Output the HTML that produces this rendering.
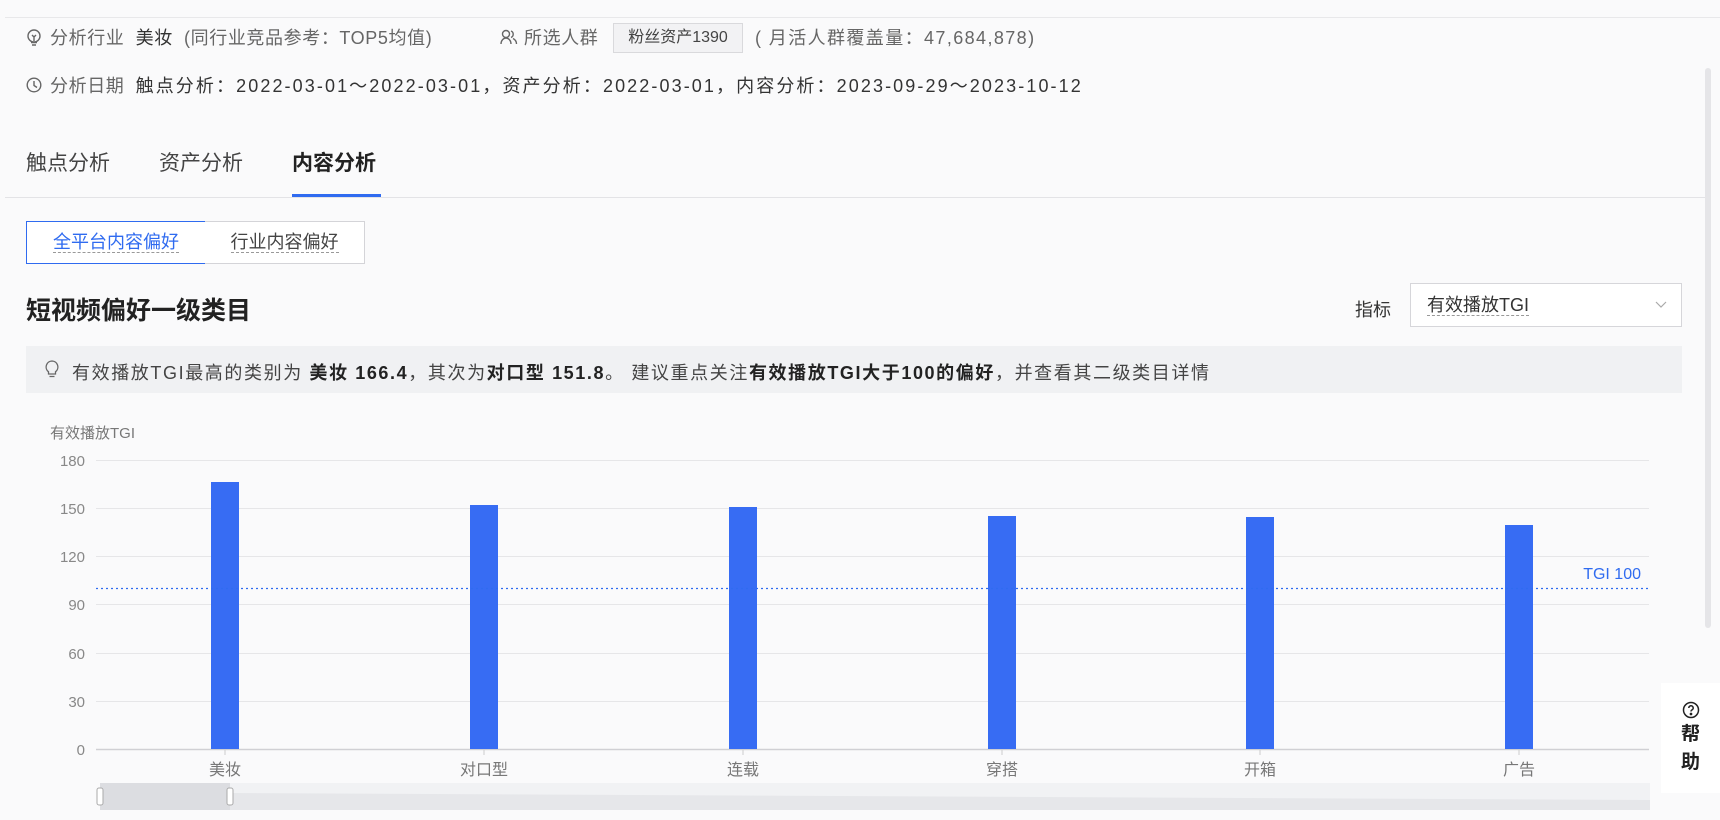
<!DOCTYPE html>
<html><head><meta charset="utf-8"><style>
*{margin:0;padding:0;box-sizing:border-box}
body{width:1720px;height:820px;overflow:hidden;background:#fafafb;font-family:"Liberation Sans","Noto Sans CJK SC",sans-serif;color:#333;position:relative}
.a{position:absolute;white-space:nowrap}
.lbl{color:#666}
.r{font-size:18px;line-height:20px}
</style></head><body>
<div class="a" style="left:5px;right:0;top:17px;height:1px;background:#e8e8ea"></div>

<svg class="a" style="left:26px;top:29px" width="16" height="17" viewBox="0 0 16 17" fill="none" stroke="#666" stroke-width="1.4"><circle cx="8" cy="7" r="6"/><path d="M5 13.5h6M6 16h4M6 6l2 2 2-2M8 8v4"/></svg>
<div class="a r" style="left:50px;top:28px;letter-spacing:0.6px"><span class="lbl">分析行业</span>&nbsp; 美妆 <span class="lbl">&nbsp;(同行业竞品参考：TOP5均值)</span></div>
<svg class="a" style="left:500px;top:29px" width="18" height="16" viewBox="0 0 18 16" fill="none" stroke="#666" stroke-width="1.4"><circle cx="6" cy="5" r="3.5"/><path d="M1 15c0-3.5 2.5-6 5-6s5 2.5 5 6M11 2a3.5 3.5 0 0 1 0 6.5M13 9.5c2 1 3.5 3 3.5 5.5"/></svg>
<div class="a r lbl" style="left:524px;top:28px;letter-spacing:0.6px">所选人群</div>
<div class="a" style="left:613px;top:23px;width:130px;height:30px;border:1px solid #d9d9dc;background:#f2f2f4;font-size:16px;line-height:28px;text-align:center;color:#444">粉丝资产1390</div>
<div class="a r lbl" style="left:755px;top:28px;letter-spacing:1.4px">( 月活人群覆盖量：47,684,878)</div>

<svg class="a" style="left:26px;top:77px" width="16" height="16" viewBox="0 0 16 16" fill="none" stroke="#666" stroke-width="1.4"><circle cx="8" cy="8" r="6.8"/><path d="M8 4v4.5l3 2"/></svg>
<div class="a r" style="left:50px;top:76px;letter-spacing:0.6px"><span class="lbl">分析日期</span>&nbsp; <span style="letter-spacing:2.1px">触点分析：2022-03-01～2022-03-01，资产分析：2022-03-01，内容分析：2023-09-29～2023-10-12</span></div>

<div class="a" style="left:26px;top:147px;font-size:21px;color:#444">触点分析</div>
<div class="a" style="left:159px;top:147px;font-size:21px;color:#444">资产分析</div>
<div class="a" style="left:292px;top:147px;font-size:21px;font-weight:bold;color:#222">内容分析</div>
<div class="a" style="left:5px;right:14px;top:197px;height:1px;background:#e3e3e6"></div>
<div class="a" style="left:292px;top:194px;width:89px;height:3px;background:#2f6bf0"></div>

<div class="a" style="left:26px;top:221px;width:180px;height:43px;border:1px solid #2f6bf0;background:#fff;font-size:18px;line-height:41px;text-align:center;color:#2f6bf0"><span style="border-bottom:1px dashed #999">全平台内容偏好</span></div>
<div class="a" style="left:205px;top:221px;width:160px;height:43px;border:1px solid #d4d4d8;border-left:none;background:#fff;font-size:18px;line-height:41px;text-align:center;color:#444"><span style="border-bottom:1px dashed #999">行业内容偏好</span></div>

<div class="a" style="left:26px;top:291px;font-size:25px;font-weight:bold;color:#222">短视频偏好一级类目</div>
<div class="a" style="left:1355px;top:296px;font-size:18px;color:#333">指标</div>
<div class="a" style="left:1410px;top:283px;width:272px;height:44px;border:1px solid #d6d6da;background:#fff;font-size:18px;line-height:42px;padding-left:16px;color:#333"><span style="border-bottom:1px dashed #999">有效播放TGI</span><svg class="a" style="right:14px;top:17px" width="12" height="8" viewBox="0 0 12 8" fill="none" stroke="#aaa" stroke-width="1.2"><path d="M1 1l5 5 5-5"/></svg></div>

<div class="a" style="left:26px;top:346px;width:1656px;height:47px;background:#f0f1f3"></div>
<svg class="a" style="left:45px;top:360px" width="14" height="19" viewBox="0 0 14 19" fill="none" stroke="#666" stroke-width="1.3"><path d="M7 1a6 6 0 0 0-3.5 10.8V14h7v-2.2A6 6 0 0 0 7 1zM4.5 16.5h5"/></svg>
<div class="a" style="left:72px;top:359px;font-size:18px;letter-spacing:1.6px;color:#444">有效播放TGI最高的类别为 <b style="color:#222">美妆 166.4</b>，其次为<b style="color:#222">对口型 151.8</b>。 建议重点关注<b style="color:#222">有效播放TGI大于100的偏好</b>，并查看其二级类目详情</div>

<svg class="a" style="left:0;top:410px" width="1720" height="410" viewBox="0 410 1720 410" font-family="Liberation Sans,Noto Sans CJK SC,sans-serif">
<text x="50" y="438" font-size="15" fill="#777">有效播放TGI</text>
<g stroke="#e6e6e8" stroke-width="1">
<line x1="96" x2="1649" y1="460.5" y2="460.5"/><line x1="96" x2="1649" y1="508.5" y2="508.5"/><line x1="96" x2="1649" y1="556.5" y2="556.5"/><line x1="96" x2="1649" y1="604.5" y2="604.5"/><line x1="96" x2="1649" y1="653.5" y2="653.5"/><line x1="96" x2="1649" y1="701.5" y2="701.5"/>
</g>
<line x1="96" x2="1649" y1="749.5" y2="749.5" stroke="#d0d0d4" stroke-width="1.5"/>
<g font-size="15" fill="#888" text-anchor="end">
<text x="85" y="466">180</text><text x="85" y="514">150</text><text x="85" y="562">120</text><text x="85" y="610">90</text><text x="85" y="659">60</text><text x="85" y="707">30</text><text x="85" y="755">0</text>
</g>
<g fill="#376cf3">
<rect x="211" y="482" width="28" height="267"/>
<rect x="470" y="505" width="28" height="244"/>
<rect x="729" y="507" width="28" height="242"/>
<rect x="988" y="516" width="28" height="233"/>
<rect x="1246" y="517" width="28" height="232"/>
<rect x="1505" y="525" width="28" height="224"/>
</g>
<line x1="96" x2="1649" y1="588.5" y2="588.5" stroke="#2f6bf0" stroke-width="1.2" stroke-dasharray="2 3"/>
<text x="1641" y="579" font-size="16" fill="#2f6bf0" text-anchor="end">TGI 100</text>
<g stroke="#ccc"><line x1="225" x2="225" y1="750" y2="755"/><line x1="484" x2="484" y1="750" y2="755"/><line x1="743" x2="743" y1="750" y2="755"/><line x1="1002" x2="1002" y1="750" y2="755"/><line x1="1260" x2="1260" y1="750" y2="755"/><line x1="1519" x2="1519" y1="750" y2="755"/></g>
<g font-size="16" fill="#777" text-anchor="middle">
<text x="225" y="775">美妆</text><text x="484" y="775">对口型</text><text x="743" y="775">连载</text><text x="1002" y="775">穿搭</text><text x="1260" y="775">开箱</text><text x="1519" y="775">广告</text>
</g>
<rect x="100" y="783" width="1550" height="27" fill="#f1f2f4"/>
<path d="M230 793 L1650 800 L1650 810 L230 810Z" fill="#e6e7ea"/>
<rect x="100" y="783" width="130" height="27" fill="#dcdde1"/>
<rect x="97" y="788" width="6" height="17" rx="2" fill="#fff" stroke="#aaa"/>
<rect x="227" y="788" width="6" height="17" rx="2" fill="#fff" stroke="#aaa"/>
</svg>

<div class="a" style="left:1705px;top:68px;width:6px;height:560px;background:#e5e5e8;border-radius:3px"></div>
<div class="a" style="left:1661px;top:683px;width:59px;height:110px;background:#fff;text-align:center;font-size:19px;font-weight:bold;color:#222;line-height:28px;padding-top:18px">
<svg width="18" height="18" viewBox="0 0 18 18" fill="none" stroke="#222" stroke-width="1.5" style="display:block;margin:0 auto 2px"><circle cx="9" cy="9" r="7.5"/><path d="M6.8 7a2.2 2.2 0 1 1 3 2c-.6.3-.8.8-.8 1.5"/><circle cx="9" cy="13" r=".6" fill="#222"/></svg>帮<br>助</div>
</body></html>
